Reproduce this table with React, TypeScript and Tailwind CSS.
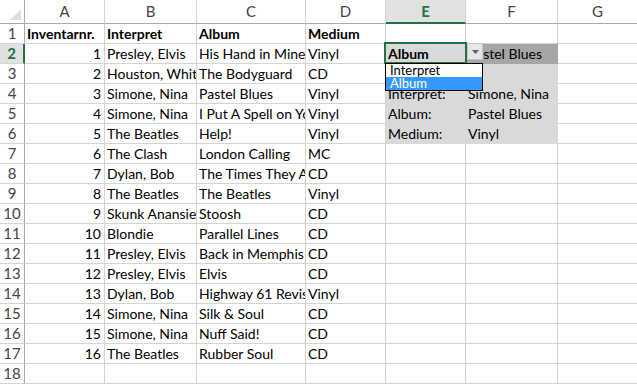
import type { ReactNode } from "react";

const COLS = [
  { key: "A", w: 80 },
  { key: "B", w: 92 },
  { key: "C", w: 109 },
  { key: "D", w: 80 },
  { key: "E", w: 80 },
  { key: "F", w: 92 },
  { key: "G", w: 80 },
];

const records: [number, string, string, string][] = [
  [1, "Presley, Elvis", "His Hand in Mine", "Vinyl"],
  [2, "Houston, Whitney", "The Bodyguard", "CD"],
  [3, "Simone, Nina", "Pastel Blues", "Vinyl"],
  [4, "Simone, Nina", "I Put A Spell on You", "Vinyl"],
  [5, "The Beatles", "Help!", "Vinyl"],
  [6, "The Clash", "London Calling", "MC"],
  [7, "Dylan, Bob", "The Times They Are a-Changin'", "CD"],
  [8, "The Beatles", "The Beatles", "Vinyl"],
  [9, "Skunk Anansie", "Stoosh", "CD"],
  [10, "Blondie", "Parallel Lines", "CD"],
  [11, "Presley, Elvis", "Back in Memphis", "CD"],
  [12, "Presley, Elvis", "Elvis", "CD"],
  [13, "Dylan, Bob", "Highway 61 Revisited", "Vinyl"],
  [14, "Simone, Nina", "Silk & Soul", "CD"],
  [15, "Simone, Nina", "Nuff Said!", "CD"],
  [16, "The Beatles", "Rubber Soul", "CD"],
];

// lookup panel in E2:F6
const lookup: Record<number, [string, string]> = {
  2: ["Album", "Pastel Blues"],
  3: ["", ""],
  4: ["Interpret:", "Simone, Nina"],
  5: ["Album:", "Pastel Blues"],
  6: ["Medium:", "Vinyl"],
};

type CellProps = {
  w: number;
  children?: ReactNode;
  right?: boolean;
  bold?: boolean;
  fill?: "light" | "dark";
};

function Cell({ w, children, right, bold, fill }: CellProps) {
  const bg =
    fill === "light"
      ? "bg-[#d9d9d9] border-[#d9d9d9]"
      : fill === "dark"
        ? "bg-[#a6a6a6] border-[#a6a6a6]"
        : "bg-white border-[#d4d4d4]";
  return (
    <div
      style={{ width: w }}
      className={`h-[20px] shrink-0 border-r border-b ${bg} overflow-hidden whitespace-nowrap leading-[20px] text-[14px] text-black ${
        right ? "text-right pr-[3px]" : "pl-[2px]"
      } ${bold ? "font-bold" : ""}`}
    >
      {children}
    </div>
  );
}

function rowCells(r: number): ReactNode[] {
  if (r === 1) {
    return [
      <Cell key="A" w={80} bold>Inventarnr.</Cell>,
      <Cell key="B" w={92} bold>Interpret</Cell>,
      <Cell key="C" w={109} bold>Album</Cell>,
      <Cell key="D" w={80} bold>Medium</Cell>,
      <Cell key="E" w={80} />,
      <Cell key="F" w={92} />,
      <Cell key="G" w={80} />,
    ];
  }
  const rec = records[r - 2];
  const lk = lookup[r];
  return [
    <Cell key="A" w={80} right>{rec ? rec[0] : ""}</Cell>,
    <Cell key="B" w={92}>{rec ? rec[1] : ""}</Cell>,
    <Cell key="C" w={109}>{rec ? rec[2] : ""}</Cell>,
    <Cell key="D" w={80}>{rec ? rec[3] : ""}</Cell>,
    lk ? (
      <Cell key="E" w={80} fill="light" bold={r === 2}>{lk[0]}</Cell>
    ) : (
      <Cell key="E" w={80} />
    ),
    lk ? (
      <Cell key="F" w={92} fill={r === 2 ? "dark" : "light"}>{lk[1]}</Cell>
    ) : (
      <Cell key="F" w={92} />
    ),
    <Cell key="G" w={80} />,
  ];
}

export default function App() {
  const rows = Array.from({ length: 18 }, (_, i) => i + 1);
  return (
    <div
      className="relative w-[637px] h-[384px] overflow-hidden bg-white select-none"
      style={{ fontFamily: "Lato, 'Open Sans', sans-serif" }}
    >
      {/* column headers */}
      <div className="flex h-[24px]">
        <div className="relative w-[25px] shrink-0 border-r border-b border-[#ababab] bg-white">
          <svg className="absolute right-[3px] bottom-[3px]" width="11" height="11" viewBox="0 0 11 11">
            <polygon points="11,0 11,11 0,11" fill="#dfdfdf" />
          </svg>
        </div>
        {COLS.map((c) =>
          c.key === "E" ? (
            <div
              key={c.key}
              style={{ width: c.w }}
              className="shrink-0 border-r border-[#d4d4d4] border-b-2 border-b-[#217346] bg-[#e1e1e1] text-center text-[15px] leading-[22px] font-bold text-[#217346]"
            >
              {c.key}
            </div>
          ) : (
            <div
              key={c.key}
              style={{ width: c.w }}
              className="shrink-0 border-r border-[#d4d4d4] border-b border-b-[#ababab] text-center text-[15px] leading-[23px] text-[#444444]"
            >
              {c.key}
            </div>
          ),
        )}
      </div>

      {rows.map((r) => (
        <div key={r} className="flex">
          {r === 2 ? (
            <div className="w-[25px] h-[20px] shrink-0 border-r-2 border-r-[#217346] border-b border-[#d4d4d4] bg-[#e1e1e1] text-center text-[15px] leading-[19px] font-bold text-[#217346]">
              {r}
            </div>
          ) : (
            <div className="w-[25px] h-[20px] shrink-0 border-r border-r-[#ababab] border-b border-[#d4d4d4] text-center text-[15px] leading-[19px] text-[#444444]">
              {r}
            </div>
          )}
          {rowCells(r)}
        </div>
      ))}

      {/* active cell outline on E2 */}
      <div className="absolute left-[384px] top-[42px] w-[83px] h-[22px] border-2 border-[#217346] pointer-events-none" />

      {/* validation dropdown arrow */}
      <div className="absolute left-[467px] top-[43px] w-[16px] h-[17px] border border-[#c3c3c3] bg-[#e6e6e6] flex items-center justify-center">
        <svg width="7" height="4" viewBox="0 0 7 4">
          <polygon points="0,0 7,0 3.5,4" fill="#606060" />
        </svg>
      </div>

      {/* validation list */}
      <div className="absolute left-[385px] top-[63px] w-[98px] h-[28px] border border-black bg-white text-[13px]">
        <div className="h-[13px] pl-[4px] leading-[13px] text-black whitespace-nowrap overflow-hidden">Interpret</div>
        <div className="h-[13px] pl-[4px] leading-[13px] bg-[#3399ff] text-white whitespace-nowrap overflow-hidden">Album</div>
      </div>
    </div>
  );
}
